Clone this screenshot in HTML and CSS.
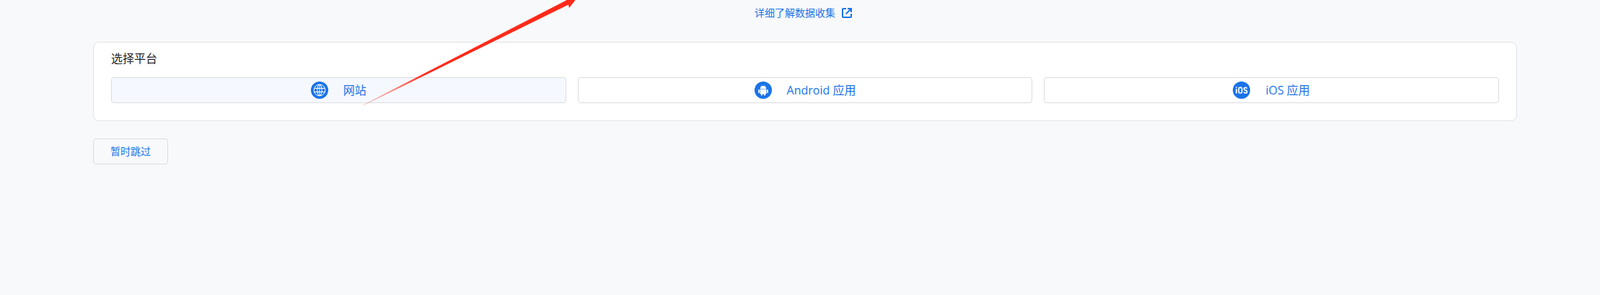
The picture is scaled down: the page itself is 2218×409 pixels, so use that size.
FILE: index.html
```html
<!DOCTYPE html>
<html lang="zh-CN">
<head>
<meta charset="utf-8">
<title>选择平台</title>
<link rel="stylesheet" href="styles.css">
</head>
<body>
<div class="page">
  <div class="learn">
    <a class="learn-link" href="#">详细了解数据收集
      <svg class="ext" viewBox="0 0 14 14"><path d="M6 1H2a1 1 0 0 0-1 1v10a1 1 0 0 0 1 1h10a1 1 0 0 0 1-1V8" fill="none" stroke="currentColor" stroke-width="2"/><path d="M8 1h5v5M13 1 5.600 8.400" fill="none" stroke="currentColor" stroke-width="2"/></svg>
    </a>
  </div>
  <section class="card">
    <h2 class="card-title">选择平台</h2>
    <div class="platforms">
      <button class="platform active">
        <svg class="picon" viewBox="0 0 24 24"><circle cx="12" cy="12" r="12" fill="#1a73e8"/><g fill="none" stroke="#fff" stroke-width="1"><circle cx="12" cy="12" r="7.800"/><ellipse cx="12" cy="12" rx="3.200" ry="7.800"/><path d="M12 4.200v15.600M4.800 9.500h14.400M4.800 14.500h14.400"/></g></svg>
        <span>网站</span>
      </button>
      <button class="platform">
        <svg class="picon" viewBox="0 0 24 24"><circle cx="12" cy="12" r="12" fill="#1a73e8"/><g fill="#fff"><path d="M7.600 10.400a4.400 4.400 0 0 1 8.800 0z"/><rect x="7.600" y="11" width="8.800" height="6.400" rx=".8"/><rect x="5.200" y="11" width="1.700" height="5" rx=".85"/><rect x="17.100" y="11" width="1.700" height="5" rx=".85"/><rect x="9" y="16" width="1.800" height="3.600" rx=".9"/><rect x="13.200" y="16" width="1.800" height="3.600" rx=".9"/></g><path d="M9.300 5.300l1 1.500M14.700 5.300l-1 1.500" stroke="#fff" stroke-width=".6"/></svg>
        <span>Android 应用</span>
      </button>
      <button class="platform">
        <svg class="picon" viewBox="0 0 24 24"><circle cx="12" cy="12" r="12" fill="#1a73e8"/><g fill="none" stroke="#fff" stroke-width="1.700"><path d="M5 10.200V16.500M5 7.500v1.400"/><rect x="8.200" y="8.300" width="4.400" height="7.700" rx="1.600"/><path d="M19.600 9.700c-.3-1-1.100-1.400-2-1.400-1.200 0-2.100.7-2.100 1.900 0 2.700 4.200 1.300 4.200 3.800 0 1.200-1 2-2.200 2-1 0-1.900-.5-2.200-1.500"/></g></svg>
        <span>iOS 应用</span>
      </button>
    </div>
  </section>
  <button class="skip">暂时跳过</button>
</div>
<svg class="arrow" viewBox="0 0 2218 409" aria-hidden="true">
  <defs>
    <linearGradient id="fade" gradientUnits="userSpaceOnUse" x1="503" y1="146" x2="590" y2="103">
      <stop offset="0" stop-color="#ff2a1a" stop-opacity="0.2"/>
      <stop offset="1" stop-color="#ff2a1a"/>
    </linearGradient>
  </defs>
  <polygon points="503,145.500 785,0.500 782,-3 800,-3 789,11 788,6.500 503.500,146.500" fill="url(#fade)"/>
</svg>
</body>
</html>
```
FILE: styles.css
```css
* { box-sizing: border-box; }
html, body { margin: 0; height: 100%; }
body {
  background: #f8f9fb;
  font-family: "Open Sans", "Noto Sans CJK SC", sans-serif;
  overflow: hidden;
  position: relative;
}
.page { padding: 0 115px 0 129px; }
.learn {
  height: 58px;
  padding-top: 7px;
  padding-right: 5px;
  display: flex;
  justify-content: center;
}
.learn-link {
  height: 20px;
  display: flex;
  align-items: center;
  gap: 9px;
  color: #1a73e8;
  font-size: 14px;
  text-decoration: none;
}
.ext { width: 14px; height: 14px; margin-top: 2px; }
.card {
  height: 110px;
  background: #fff;
  border: 1px solid #e0e2e6;
  border-radius: 8px;
  padding: 11px 24px 0;
}
.card-title {
  margin: 0;
  height: 24px;
  line-height: 22px;
  font-size: 16px;
  font-weight: 400;
  color: #202124;
}
.platforms {
  margin-top: 13px;
  display: grid;
  grid-template-columns: repeat(3, 1fr);
  gap: 16px;
}
.platform {
  height: 36px;
  display: flex;
  align-items: center;
  justify-content: center;
  gap: 21px;
  padding: 0 0 2px;
  background: #fff;
  border: 1px solid #dadce0;
  border-radius: 4px;
  color: #1a73e8;
  font: inherit;
  font-size: 16px;
}
.platform .picon { margin-top: 2px; }
.platform.active { background: #f5f8fe; }
.picon { width: 24px; height: 24px; }
.skip {
  display: block;
  margin-top: 24px;
  width: 104px;
  height: 36px;
  padding: 0 0 2px;
  background: transparent;
  border: 1px solid #dadce0;
  border-radius: 4px;
  color: #1a73e8;
  font: inherit;
  font-size: 14px;
}
.arrow {
  position: absolute;
  left: 0;
  top: 0;
  width: 2218px;
  height: 409px;
  pointer-events: none;
}
```
